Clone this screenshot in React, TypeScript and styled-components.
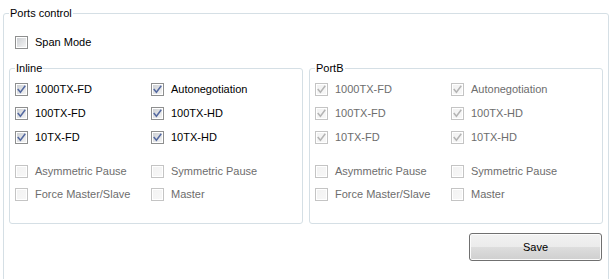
import React from 'react';
import styled, { createGlobalStyle } from 'styled-components';

type CheckOption = {
  label: string;
  checked: boolean;
};

const speedOptions: CheckOption[] = [
  { label: '1000TX-FD', checked: true },
  { label: 'Autonegotiation', checked: true },
  { label: '100TX-FD', checked: true },
  { label: '100TX-HD', checked: true },
  { label: '10TX-FD', checked: true },
  { label: '10TX-HD', checked: true },
];

const pauseOptions: CheckOption[] = [
  { label: 'Asymmetric Pause', checked: false },
  { label: 'Symmetric Pause', checked: false },
  { label: 'Force Master/Slave', checked: false },
  { label: 'Master', checked: false },
];

const GlobalStyle = createGlobalStyle`
  html, body {
    margin: 0;
    padding: 0;
    background: #ffffff;
    overflow: hidden;
  }
  body {
    font-family: "Liberation Sans", Arial, sans-serif;
    font-size: 11px;
    color: #000000;
  }
`;

const CheckIcon: React.FC<{ checked: boolean; disabled?: boolean }> = ({ checked, disabled }) => {
  const id = disabled ? 'cbDis' : 'cbEn';
  return (
    <svg width="13" height="13" viewBox="0 0 13 13" style={{ flexShrink: 0 }}>
      <defs>
        <linearGradient id={id} x1="0" y1="0" x2="1" y2="1">
          <stop offset="0" stopColor={disabled ? '#f2f2f2' : '#cdd0d4'} />
          <stop offset="1" stopColor={disabled ? '#f7f7f7' : '#f4f4f4'} />
        </linearGradient>
      </defs>
      <rect x="0.5" y="0.5" width="12" height="12" fill="#ffffff" stroke={disabled ? '#c4c4c4' : '#8e8f8f'} />
      <rect x="2" y="2" width="9" height="9" fill={`url(#${id})`} />
      {checked && (
        <path
          d="M3.2 6.6 L5.4 9.2 L9.8 3.4"
          fill="none"
          stroke={disabled ? '#b4b4b4' : '#5469a0'}
          strokeWidth="1.5"
          strokeLinecap="square"
          strokeLinejoin="miter"
        />
      )}
    </svg>
  );
};

const CheckBox: React.FC<{ label: string; checked: boolean; disabled?: boolean }> = ({
  label,
  checked,
  disabled,
}) => (
  <CheckRow $disabled={disabled}>
    <CheckIcon checked={checked} disabled={disabled} />
    <span>{label}</span>
  </CheckRow>
);

const PortGroup: React.FC<{ title: string; disabled?: boolean }> = ({ title, disabled }) => (
  <Group>
    <Legend>{title}</Legend>
    <OptionGrid>
      {speedOptions.map((o) => (
        <CheckBox key={o.label} label={o.label} checked={o.checked} disabled={disabled} />
      ))}
    </OptionGrid>
    <PauseGrid>
      {pauseOptions.map((o) => (
        <CheckBox key={o.label} label={o.label} checked={o.checked} disabled />
      ))}
    </PauseGrid>
  </Group>
);

export default function App() {
  return (
    <>
      <GlobalStyle />
      <Outer>
        <Legend>Ports control</Legend>
        <SpanRow>
          <CheckBox label="Span Mode" checked={false} />
        </SpanRow>
        <Groups>
          <PortGroup title="Inline" />
          <PortGroup title="PortB" disabled />
        </Groups>
        <Footer>
          <SaveButton type="button">Save</SaveButton>
        </Footer>
      </Outer>
    </>
  );
}

const Outer = styled.fieldset`
  box-sizing: border-box;
  margin: 7px 0 0 3px;
  width: 606px;
  height: 300px;
  padding: 16px 5px 0 5px;
  border: 1px solid #d5dfe5;
  border-radius: 3px;
  min-width: 0;
`;

const Legend = styled.legend`
  padding: 0 1px;
  margin-left: 0;
  line-height: 13px;
  font-size: 11px;
  color: #000000;
`;

const SpanRow = styled.div`
  display: flex;
  padding-left: 6px;
`;

const Groups = styled.div`
  display: flex;
  gap: 6px;
  margin-top: 13px;
`;

const Group = styled.fieldset`
  box-sizing: border-box;
  margin: 0;
  width: 294px;
  height: 162px;
  padding: 8px 0 0 5px;
  border: 1px solid #d5dfe5;
  border-radius: 3px;
  min-width: 0;
`;

const OptionGrid = styled.div`
  display: grid;
  grid-template-columns: 136px 1fr;
  row-gap: 11px;
`;

const PauseGrid = styled(OptionGrid)`
  row-gap: 10px;
  margin-top: 21px;
`;

const CheckRow = styled.label<{ $disabled?: boolean }>`
  display: flex;
  align-items: center;
  gap: 7px;
  height: 13px;
  line-height: 13px;
  font-size: 11px;
  white-space: nowrap;
  color: ${(p) => (p.$disabled ? '#6d6d6d' : '#000000')};
`;

const Footer = styled.div`
  display: flex;
  justify-content: flex-end;
  margin-top: 9px;
`;

const SaveButton = styled.button`
  box-sizing: border-box;
  width: 133px;
  height: 28px;
  margin-right: 1px;
  border: 1px solid #707070;
  border-radius: 3px;
  box-shadow: inset 0 0 0 1px #fcfcfc;
  background: linear-gradient(to bottom, #f2f2f2 0%, #ebebeb 50%, #dddddd 51%, #cfcfcf 100%);
  font-family: "Liberation Sans", Arial, sans-serif;
  font-size: 11px;
  color: #000000;
  padding: 0;
`;
